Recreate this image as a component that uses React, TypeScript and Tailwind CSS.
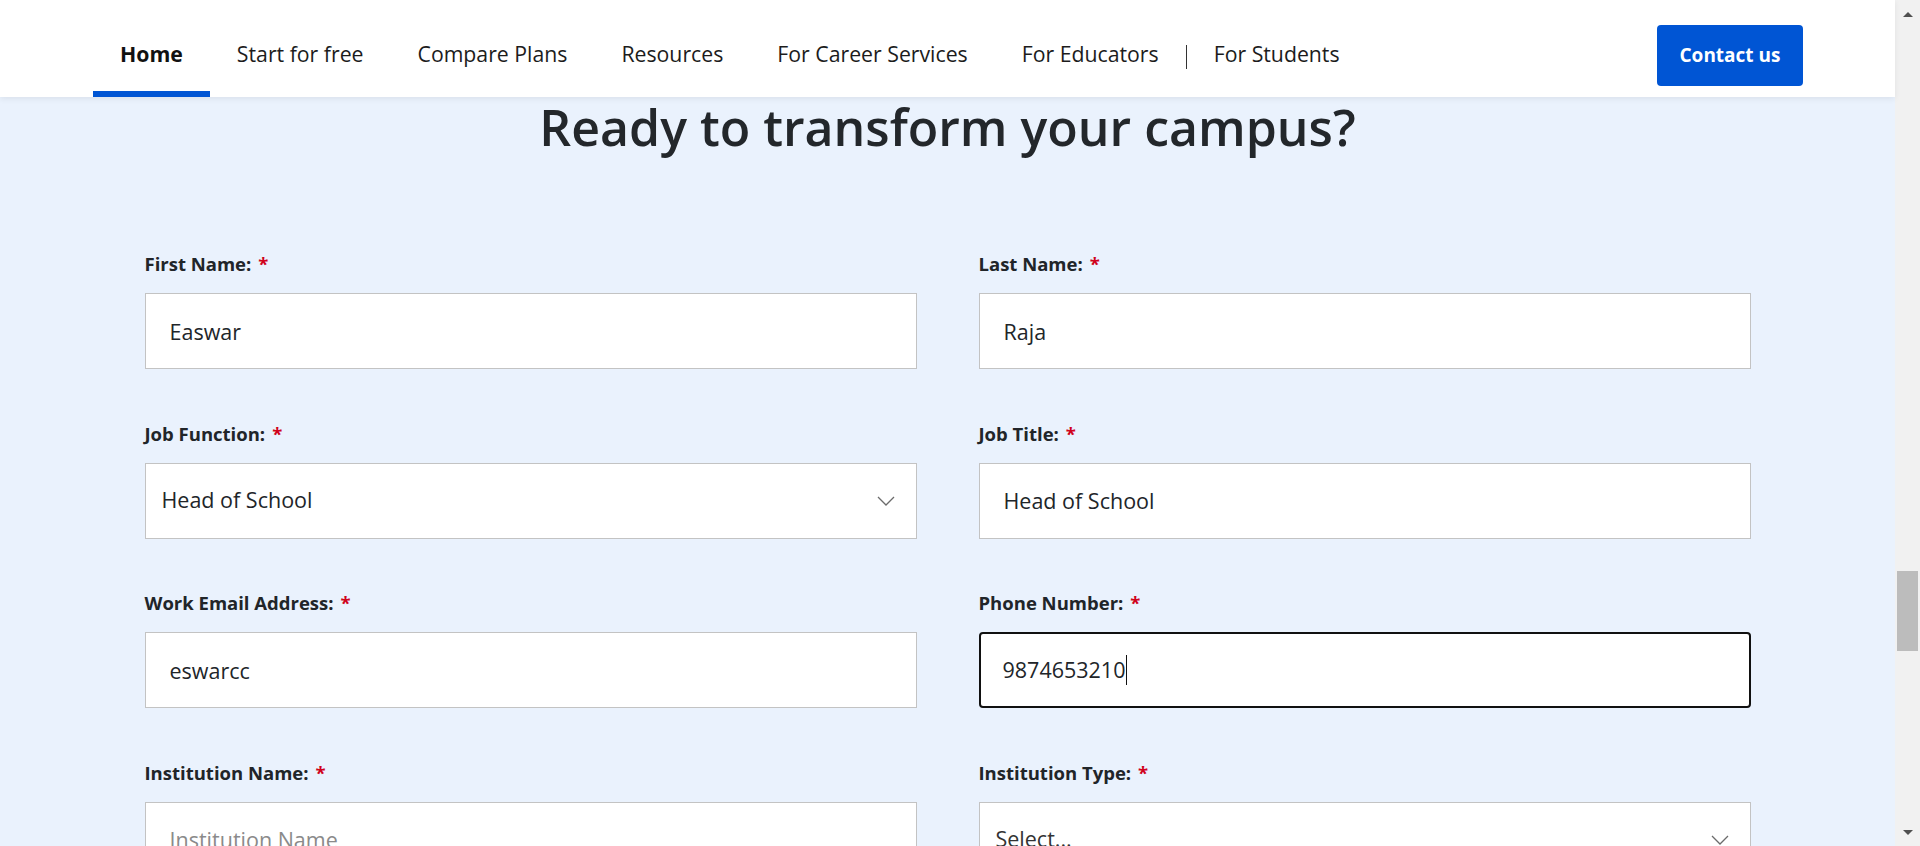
import React from "react";

const navItems = [
  "Home",
  "Start for free",
  "Compare Plans",
  "Resources",
  "For Career Services",
  "For Educators",
  "For Students",
];

type Field = {
  label: string;
  kind: "input" | "select" | "focused";
  value?: string;
  placeholder?: string;
};

const fields: Field[] = [
  { label: "First Name:", kind: "input", value: "Easwar" },
  { label: "Last Name:", kind: "input", value: "Raja" },
  { label: "Job Function:", kind: "select", value: "Head of School" },
  { label: "Job Title:", kind: "input", value: "Head of School" },
  { label: "Work Email Address:", kind: "input", value: "eswarcc" },
  { label: "Phone Number:", kind: "focused", value: "9874653210" },
  { label: "Institution Name:", kind: "input", placeholder: "Institution Name" },
  { label: "Institution Type:", kind: "select", placeholder: "Select..." },
];

function Chevron() {
  return (
    <svg width="18" height="10" viewBox="0 0 18 10" fill="none" className="shrink-0">
      <polyline points="1,1 9,9 17,1" stroke="#6b6b6b" strokeWidth="1.3" />
    </svg>
  );
}

function FormField({ field }: { field: Field }) {
  return (
    <div className="flex flex-col">
      <label className="h-[24px] leading-[24px] text-[18.5px] font-bold text-[#212529] mb-[17px]">
        {field.label}
        <span className="ml-[7px] text-[#d0021b]">*</span>
      </label>
      {field.kind === "input" && (
        <input
          readOnly
          defaultValue={field.value}
          placeholder={field.placeholder}
          className="h-[76px] w-full bg-white border border-[#c3c3c3] pl-[24px] pr-4 text-[21.5px] text-[#212529] placeholder:text-[#8a8a8a] outline-none"
        />
      )}
      {field.kind === "select" && (
        <div className="h-[76px] w-full bg-white border border-[#c3c3c3] pl-[16px] pr-[21px] flex items-center justify-between">
          <span className={field.value ? "text-[21.5px] text-[#212529]" : "text-[21.5px] text-[#333]"}>
            {field.value ?? field.placeholder}
          </span>
          <Chevron />
        </div>
      )}
      {field.kind === "focused" && (
        <div className="h-[76px] w-full bg-white border-2 border-[#111] rounded-[4px] pl-[22px] flex items-center">
          <span className="text-[21.5px] text-[#212529]">{field.value}</span>
          <span className="w-px h-[30px] bg-[#111] ml-px" />
        </div>
      )}
    </div>
  );
}

export default function App() {
  return (
    <div className="flex h-[846px] w-full overflow-hidden font-['Open_Sans',sans-serif]">
      <div className="flex-1 min-w-0 bg-[#eaf2fd] flex flex-col">
        <header className="h-[97px] shrink-0 bg-white flex pl-[93px] pr-[92px] relative z-10 shadow-[0_2px_6px_rgba(0,0,0,0.07)]">
          <nav className="flex">
            {navItems.map((item, i) => (
              <React.Fragment key={item}>
                {item === "For Students" && (
                  <span className="w-px h-[24px] bg-[#333] self-center mt-[17px]" />
                )}
                <a
                  className={
                    i === 0
                      ? "flex items-center px-[27px] pt-[16px] border-b-[6px] border-[#0055d4] text-[21.25px] font-bold text-[#111]"
                      : "flex items-center px-[27px] pt-[16px] border-b-[6px] border-transparent text-[21.25px] text-[#1c1c1c]"
                  }
                >
                  {item}
                </a>
              </React.Fragment>
            ))}
          </nav>
          <a className="ml-auto self-start mt-[25px] h-[61px] w-[146px] rounded-[4px] bg-[#0055d4] text-white font-bold text-[19px] flex items-center justify-center">
            Contact us
          </a>
        </header>

        <main className="flex flex-col items-center">
          <h1 className="text-[50px] leading-[60px] font-semibold text-[#23272b]">
            Ready to transform your campus?
          </h1>
          <form className="mt-[95px] w-[1606px] grid grid-cols-2 gap-x-[62px] gap-y-[52.5px]">
            {fields.map((f) => (
              <FormField key={f.label} field={f} />
            ))}
          </form>
        </main>
      </div>

      <div className="w-[25px] shrink-0 bg-[#f1f1f1] flex flex-col items-center">
        <div className="mt-[12px] w-0 h-0 border-l-[5px] border-r-[5px] border-b-[5px] border-l-transparent border-r-transparent border-b-[#505050]" />
        <div className="mt-[554px] w-[21px] h-[80px] bg-[#bcbcbc]" />
        <div className="mt-auto mb-[11px] w-0 h-0 border-l-[5px] border-r-[5px] border-t-[5px] border-l-transparent border-r-transparent border-t-[#505050]" />
      </div>
    </div>
  );
}
